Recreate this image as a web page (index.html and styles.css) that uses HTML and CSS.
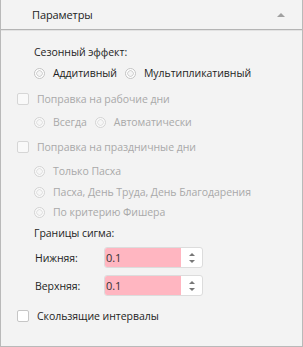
FILE: index.html
```html
<!DOCTYPE html>
<html>
<head>
<meta charset="utf-8">
<link rel="stylesheet" href="styles.css">
</head>
<body>
<div class="panel">
  <div class="header">
    <span class="title">Параметры</span>
    <span class="arrow"></span>
  </div>
  <div class="content">
    <div class="row label-row r-season">Сезонный эффект:</div>
    <div class="row radio-row r-seasonopts">
      <span class="opt"><span class="radio"></span>Аддитивный</span>
      <span class="opt"><span class="radio"></span>Мультипликативный</span>
    </div>
    <div class="row check-row disabled r-work"><span class="check"></span>Поправка на рабочие дни</div>
    <div class="row radio-row disabled r-workopts">
      <span class="opt"><span class="radio"></span>Всегда</span>
      <span class="opt"><span class="radio"></span>Автоматически</span>
    </div>
    <div class="row check-row disabled r-hol"><span class="check"></span>Поправка на праздничные дни</div>
    <div class="row radio-row disabled r-hol1"><span class="opt"><span class="radio"></span>Только Пасха</span></div>
    <div class="row radio-row disabled r-hol2"><span class="opt"><span class="radio"></span>Пасха, День Труда, День Благодарения</span></div>
    <div class="row radio-row disabled r-hol3"><span class="opt"><span class="radio"></span>По критерию Фишера</span></div>
    <div class="row label-row r-sigma">Границы сигма:</div>
    <div class="field-row r-low">
      <span class="field-label">Нижняя:</span>
      <div class="spin">
        <span class="spin-value">0.1</span>
        <span class="spin-btns"><span class="up"></span><span class="down"></span></span>
      </div>
    </div>
    <div class="field-row r-high">
      <span class="field-label">Верхняя:</span>
      <div class="spin">
        <span class="spin-value">0.1</span>
        <span class="spin-btns"><span class="up"></span><span class="down"></span></span>
      </div>
    </div>
    <div class="row check-row r-slide"><span class="check"></span>Скользящие интервалы</div>
  </div>
</div>
</body>
</html>
```
FILE: styles.css
```css
html, body {
  margin: 0;
  padding: 0;
  background: #f3f3f3;
}
.panel {
  width: 301px;
  height: 346px;
  border: 1px solid #b9b9b9;
  border-top: none;
  background: #f3f3f3;
  font-family: "Open Sans", "Noto Sans", sans-serif;
  font-size: 10.5px;
  letter-spacing: -0.05px;
  color: #1e1e1e;
}
.header {
  height: 29px;
  border-bottom: 1px solid #b4b4b4;
  box-shadow: 0 1px 0 #e2e2e2;
  display: flex;
  align-items: center;
  justify-content: space-between;
  padding: 0 17px 0 31px;
}
.title {
  font-size: 11px;
  letter-spacing: -0.1px;
  color: #222;
  margin-top: -1px;
}
.arrow {
  width: 0;
  height: 0;
  border-left: 4px solid transparent;
  border-right: 4px solid transparent;
  border-bottom: 4px solid #a0a0a0;
  margin-top: 1px;
}
.content {
  padding-top: 12px;
}
.row {
  height: 20px;
  display: flex;
  align-items: center;
  white-space: nowrap;
}
.label-row {
  padding-left: 33px;
}
.radio-row {
  padding-left: 33px;
}
.check-row {
  padding-left: 16px;
}
.disabled {
  color: #a9a9a9;
}
.opt {
  display: inline-flex;
  align-items: center;
  margin-right: 8px;
}
.radio {
  width: 9px;
  height: 9px;
  border: 1px solid #c4c4c4;
  border-radius: 50%;
  background: radial-gradient(circle, #f4f4f4 0 2px, #d4d4d4 2.5px 3px, #ffffff 3.5px);
  margin-right: 8px;
  flex: none;
}
.disabled .radio {
  border-color: #d4d4d4;
  background: radial-gradient(circle, #f6f6f6 0 2px, #e2e2e2 2.5px 3px, #fafafa 3.5px);
}
.check {
  width: 10px;
  height: 10px;
  border: 1px solid #c6c6c6;
  border-radius: 2px;
  background: #fff;
  margin-right: 8px;
  flex: none;
}
.disabled .check {
  border-color: #d6d6d6;
  background: #f9f9f9;
}
.r-season { margin-top: 0; }
.r-seasonopts { margin-top: 1px; }
.r-work { margin-top: 6px; }
.r-workopts { margin-top: 3px; }
.r-hol { margin-top: 5px; }
.r-hol1 { margin-top: 4px; }
.r-hol2 { margin-top: 1px; }
.r-hol3 { margin-top: 0; }
.r-sigma { margin-top: 1px; }
.field-row {
  display: flex;
  align-items: center;
  height: 21px;
  padding-left: 34px;
}
.r-low { margin-top: 4px; }
.r-high { margin-top: 7px; }
.r-slide { margin-top: 10px; }
.field-label {
  width: 69px;
}
.spin {
  width: 97px;
  height: 19px;
  border: 1px solid #dcdcdc;
  border-radius: 3px;
  display: flex;
  overflow: hidden;
  background: #fff;
}
.spin-value {
  flex: 1;
  background: #ffb6c1;
  padding-left: 1px;
  line-height: 19px;
  color: #333;
  font-size: 11px;
}
.spin-btns {
  width: 21px;
  display: flex;
  flex-direction: column;
  align-items: center;
  justify-content: center;
  gap: 4px;
}
.up {
  width: 0;
  height: 0;
  border-left: 3px solid transparent;
  border-right: 3px solid transparent;
  border-bottom: 3px solid #777;
}
.down {
  width: 0;
  height: 0;
  border-left: 3px solid transparent;
  border-right: 3px solid transparent;
  border-top: 3px solid #777;
}
```
